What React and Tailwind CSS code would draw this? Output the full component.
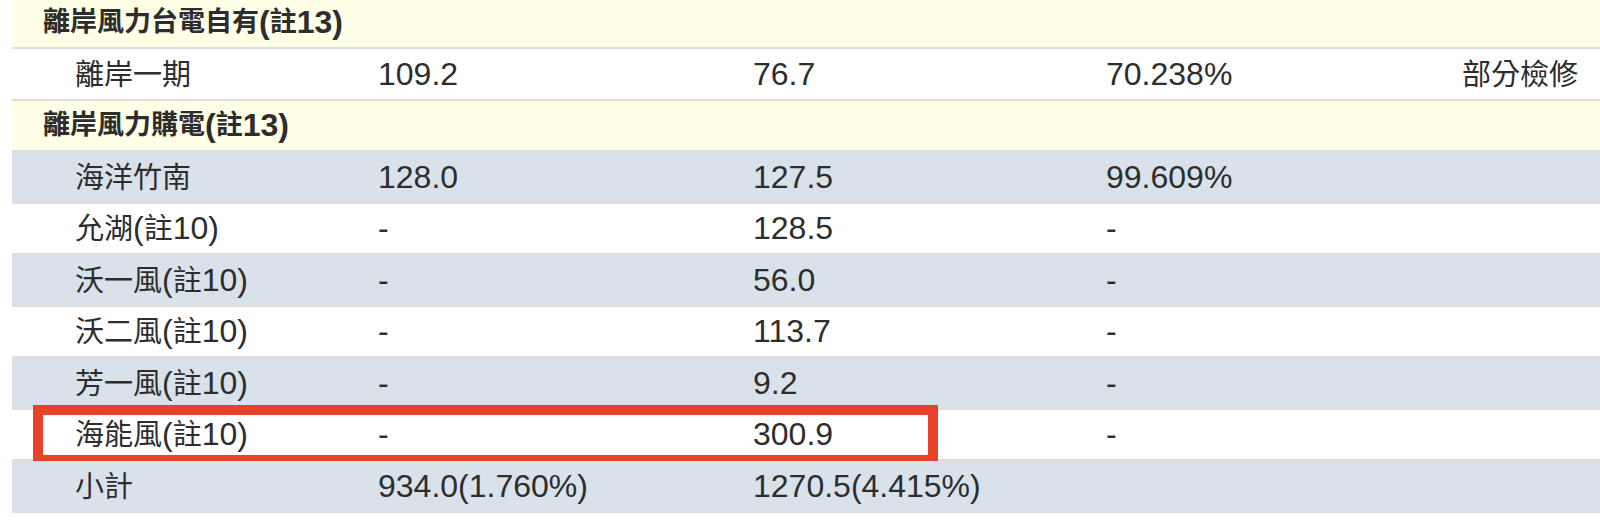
import React from 'react';

const CJK = /([\u2E80-\u9FFF\uF900-\uFAFF]+)/;

// CJK runs read smaller than the Latin digits in the reference
const Txt = ({ children, bold }) => (
  <>
    {String(children).split(CJK).map((part, i) =>
      i % 2 === 1 ? (
        <span key={i} className={bold ? 'text-[27px]' : 'text-[29px]'}>{part}</span>
      ) : (
        <span key={i}>{part}</span>
      )
    )}
  </>
);

const rows = [
  { type: 'head', label: '離岸風力台電自有(註13)' },
  { label: '離岸一期', cap: '109.2', net: '76.7', rate: '70.238%', note: '部分檢修', bg: 'white' },
  { type: 'head', label: '離岸風力購電(註13)' },
  { label: '海洋竹南', cap: '128.0', net: '127.5', rate: '99.609%', note: '', bg: 'blue' },
  { label: '允湖(註10)', cap: '-', net: '128.5', rate: '-', note: '', bg: 'white' },
  { label: '沃一風(註10)', cap: '-', net: '56.0', rate: '-', note: '', bg: 'blue' },
  { label: '沃二風(註10)', cap: '-', net: '113.7', rate: '-', note: '', bg: 'white' },
  { label: '芳一風(註10)', cap: '-', net: '9.2', rate: '-', note: '', bg: 'blue' },
  { label: '海能風(註10)', cap: '-', net: '300.9', rate: '-', note: '', bg: 'white', marked: true },
  { label: '小計', cap: '934.0(1.760%)', net: '1270.5(4.415%)', rate: '', note: '', bg: 'blue' },
];

export default function App() {
  return (
    <div className="bg-white h-[524px] overflow-hidden pl-[12px] text-[32px] text-[#2d2d2d] font-['Liberation_Sans','Noto_Sans_CJK_TC',sans-serif]">
      <div className="-mt-[2.5px]">
        {rows.map((row, idx) =>
          row.type === 'head' ? (
            <div
              key={idx}
              className="h-[51.5px] border-b-2 border-[#dedede] bg-[#fffee7] flex items-center pl-[31px] font-bold"
            >
              <Txt bold>{row.label}</Txt>
            </div>
          ) : (
            <div
              key={idx}
              className={`relative h-[51.5px] border-b-2 border-[#dedede] grid grid-cols-[366px_375px_353px_356px_1fr] items-center ${
                row.bg === 'blue' ? 'bg-[#d9e2ea]' : 'bg-white'
              }`}
            >
              <div className="pl-[63px] whitespace-nowrap"><Txt>{row.label}</Txt></div>
              <div className="whitespace-nowrap"><Txt>{row.cap}</Txt></div>
              <div className="whitespace-nowrap"><Txt>{row.net}</Txt></div>
              <div className="whitespace-nowrap"><Txt>{row.rate}</Txt></div>
              <div className="whitespace-nowrap"><Txt>{row.note}</Txt></div>
              {row.marked && (
                <div className="absolute -top-[4.5px] left-[21px] w-[905px] h-[60px] border-[10px] border-[#e8422a] pointer-events-none" />
              )}
            </div>
          )
        )}
      </div>
    </div>
  );
}
